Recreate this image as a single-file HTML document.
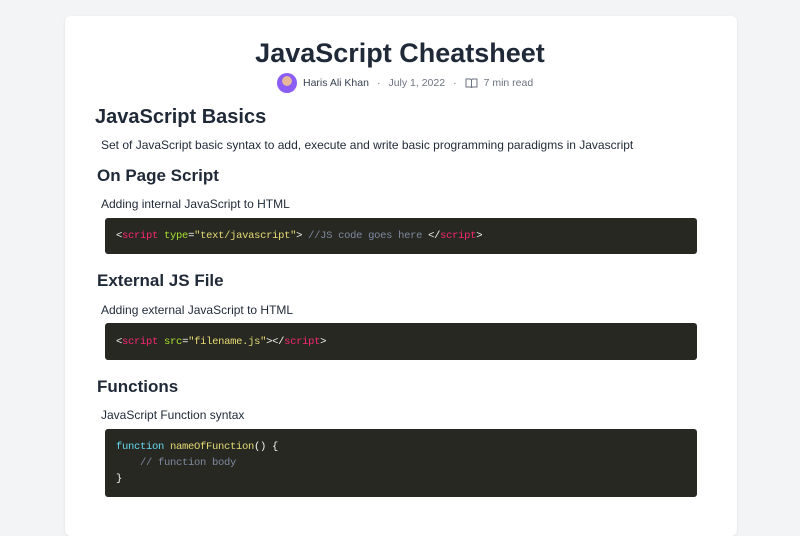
<!DOCTYPE html>
<html><head><meta charset="utf-8"><style>
body{margin:0;background:#f3f4f6;font-family:"Liberation Sans",sans-serif;color:#1f2937;width:800px;height:518px;overflow:hidden}
.card{position:absolute;left:65px;top:16px;width:672px;height:520px;background:#fff;border-radius:6px;box-shadow:0 1px 3px rgba(0,0,0,.08)}
.a{position:absolute;white-space:nowrap}
h1{position:absolute;margin:0;top:38px;left:0;width:800px;text-align:center;font-size:27px;font-weight:600;color:#1f2937}
.meta{top:73px;left:277px;font-size:10.5px;color:#6b7280;display:flex;align-items:center}
.av{width:20px;height:20px;border-radius:50%;background:radial-gradient(circle at 50% 40%,#e8b89a 0 30%,#8b5cf6 32%);margin-right:6px}
h2{font-size:20px;font-weight:600;margin:0;color:#1f2937}
h3{font-size:17px;font-weight:600;margin:0;color:#1f2937}
p{font-size:12px;margin:0;color:#1f2937}
.code{position:absolute;left:105px;width:592px;background:#272822;border-radius:3px;font-family:"Liberation Mono",monospace;font-size:10.5px;letter-spacing:-0.3px;color:#f8f8f2;box-sizing:border-box;padding:0 11px;line-height:16px}
.t{color:#f92672}.at{color:#a6e22e}.s{color:#e6db74}.c{color:#7f8aa0}.k{color:#66d9ef}.f{color:#e6db74}
</style></head><body>
<div class="card"></div>
<h1>JavaScript Cheatsheet</h1>
<div class="a meta"><div class="av"></div><span style="color:#374151">Haris Ali Khan</span><span style="margin:0 8px">·</span>July 1, 2022<span style="margin:0 8px">·</span>
<svg width="13" height="10" viewBox="0 0 13 10" style="margin-right:6px"><path d="M1 1h4.5l1 1 1-1H12v8H7.5l-1 .5-1-.5H1z M6.5 2v7.5" fill="none" stroke="#6b7280" stroke-width="1"/></svg>7 min read</div>
<h2 class="a" style="left:95px;top:106px">JavaScript Basics</h2>
<p class="a" style="left:101px;top:138px">Set of JavaScript basic syntax to add, execute and write basic programming paradigms in Javascript</p>
<h3 class="a" style="left:97px;top:166px">On Page Script</h3>
<p class="a" style="left:101px;top:197px">Adding internal JavaScript to HTML</p>
<div class="code" style="top:218px;height:36px;padding-top:10px">&lt;<span class="t">script</span> <span class="at">type</span>=<span class="s">"text/javascript"</span>&gt; <span class="c">//JS code goes here</span> &lt;/<span class="t">script</span>&gt;</div>
<h3 class="a" style="left:97px;top:271px">External JS File</h3>
<p class="a" style="left:101px;top:303px">Adding external JavaScript to HTML</p>
<div class="code" style="top:323px;height:37px;padding-top:11px">&lt;<span class="t">script</span> <span class="at">src</span>=<span class="s">"filename.js"</span>&gt;&lt;/<span class="t">script</span>&gt;</div>
<h3 class="a" style="left:97px;top:377px">Functions</h3>
<p class="a" style="left:101px;top:408px">JavaScript Function syntax</p>
<div class="code" style="top:429px;height:68px;padding-top:10px"><span class="k">function</span> <span class="f">nameOfFunction</span>() {<br>&nbsp;&nbsp;&nbsp;&nbsp;<span class="c">// function body</span><br>}</div>
</body></html>
